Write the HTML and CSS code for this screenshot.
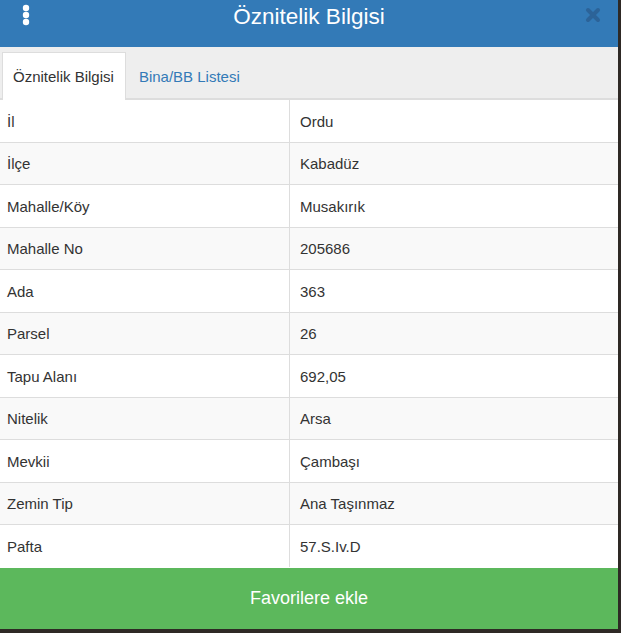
FILE: index.html
```html
<!DOCTYPE html>
<html lang="tr">
<head>
  <meta charset="UTF-8">
  <meta name="viewport" content="width=device-width, initial-scale=1.0">
  <title>Öznitelik Bilgisi</title>
  <link rel="stylesheet" href="styles.css">
</head>
<body>
  <div class="panel">
    <div class="panel-header">
      <span class="menu-dots">
        <svg width="10" height="22" viewBox="0 0 10 22">
          <circle cx="5" cy="4" r="3.2" fill="#fff"/>
          <circle cx="5" cy="11" r="3.2" fill="#fff"/>
          <circle cx="5" cy="18" r="3.2" fill="#fff"/>
        </svg>
      </span>
      <h1>Öznitelik Bilgisi</h1>
      <span class="close-btn">
        <svg width="16" height="16" viewBox="0 0 16 16">
          <path d="M3 3 L13 13 M13 3 L3 13" stroke="#2c6398" stroke-width="4" stroke-linecap="round"/>
        </svg>
      </span>
    </div>

    <ul class="tabs">
      <li class="tab active">Öznitelik Bilgisi</li>
      <li class="tab">Bina/BB Listesi</li>
    </ul>

    <table class="info-table">
      <tr><td>İl</td><td>Ordu</td></tr>
      <tr><td>İlçe</td><td>Kabadüz</td></tr>
      <tr><td>Mahalle/Köy</td><td>Musakırık</td></tr>
      <tr><td>Mahalle No</td><td>205686</td></tr>
      <tr><td>Ada</td><td>363</td></tr>
      <tr><td>Parsel</td><td>26</td></tr>
      <tr><td>Tapu Alanı</td><td>692,05</td></tr>
      <tr><td>Nitelik</td><td>Arsa</td></tr>
      <tr><td>Mevkii</td><td>Çambaşı</td></tr>
      <tr><td>Zemin Tip</td><td>Ana Taşınmaz</td></tr>
      <tr><td>Pafta</td><td>57.S.Iv.D</td></tr>
    </table>

    <button class="fav-btn">Favorilere ekle</button>
  </div>
</body>
</html>
```

FILE: styles.css
```css
body {
  font-family: "Liberation Sans", Arial, sans-serif;
  margin: 0;
  padding: 0;
  background-color: #2e2925;
}

.panel {
  width: 618px;
  height: 629px;
  background-color: #fff;
  display: flex;
  flex-direction: column;
}

.panel-header {
  flex-shrink: 0;
  height: 47px;
  background-color: #337ab7;
  display: flex;
  align-items: flex-start;
  position: relative;
}

.menu-dots {
  position: absolute;
  left: 21px;
  top: 4px;
}

.panel-header h1 {
  flex: 1;
  margin: 0;
  padding-top: 4px;
  text-align: center;
  color: #fff;
  font-size: 22.5px;
  font-weight: normal;
  line-height: 26px;
}

.close-btn {
  position: absolute;
  right: 17px;
  top: 7px;
}

.tabs {
  flex-shrink: 0;
  list-style: none;
  margin: 0;
  padding: 5px 0 0 2px;
  background-color: #eee;
  border-bottom: 2px solid #ddd;
  display: flex;
  height: 46px;
}

.tab {
  padding: 14px 11px 12px 12px;
  font-size: 15px;
  line-height: 20px;
  color: #337ab7;
  border: 1px solid transparent;
  border-bottom: none;
}

.tab.active {
  padding-left: 10px;
  background-color: #fff;
  color: #333;
  border-color: #ddd;
  margin-bottom: -2px;
  padding-bottom: 14px;
}

.info-table {
  flex-shrink: 0;
  width: 100%;
  border-collapse: collapse;
  font-size: 15px;
  color: #333;
}

.info-table td {
  height: 40.5px;
  padding: 1px 10px 0 7px;
  border-top: 1px solid #ddd;
}

.info-table tr:first-child td {
  border-top: none;
}

.info-table td:first-child {
  width: 272px;
  border-right: 1px solid #ddd;
}

.info-table tr:nth-child(even) td {
  background-color: #f9f9f9;
}

.info-table td:last-child {
  padding-left: 10px;
}

.fav-btn {
  margin-top: auto;
  height: 61px;
  border: none;
  background-color: #5cb85c;
  color: #fff;
  font-family: "Liberation Sans", Arial, sans-serif;
  font-size: 18px;
  cursor: pointer;
}
```
